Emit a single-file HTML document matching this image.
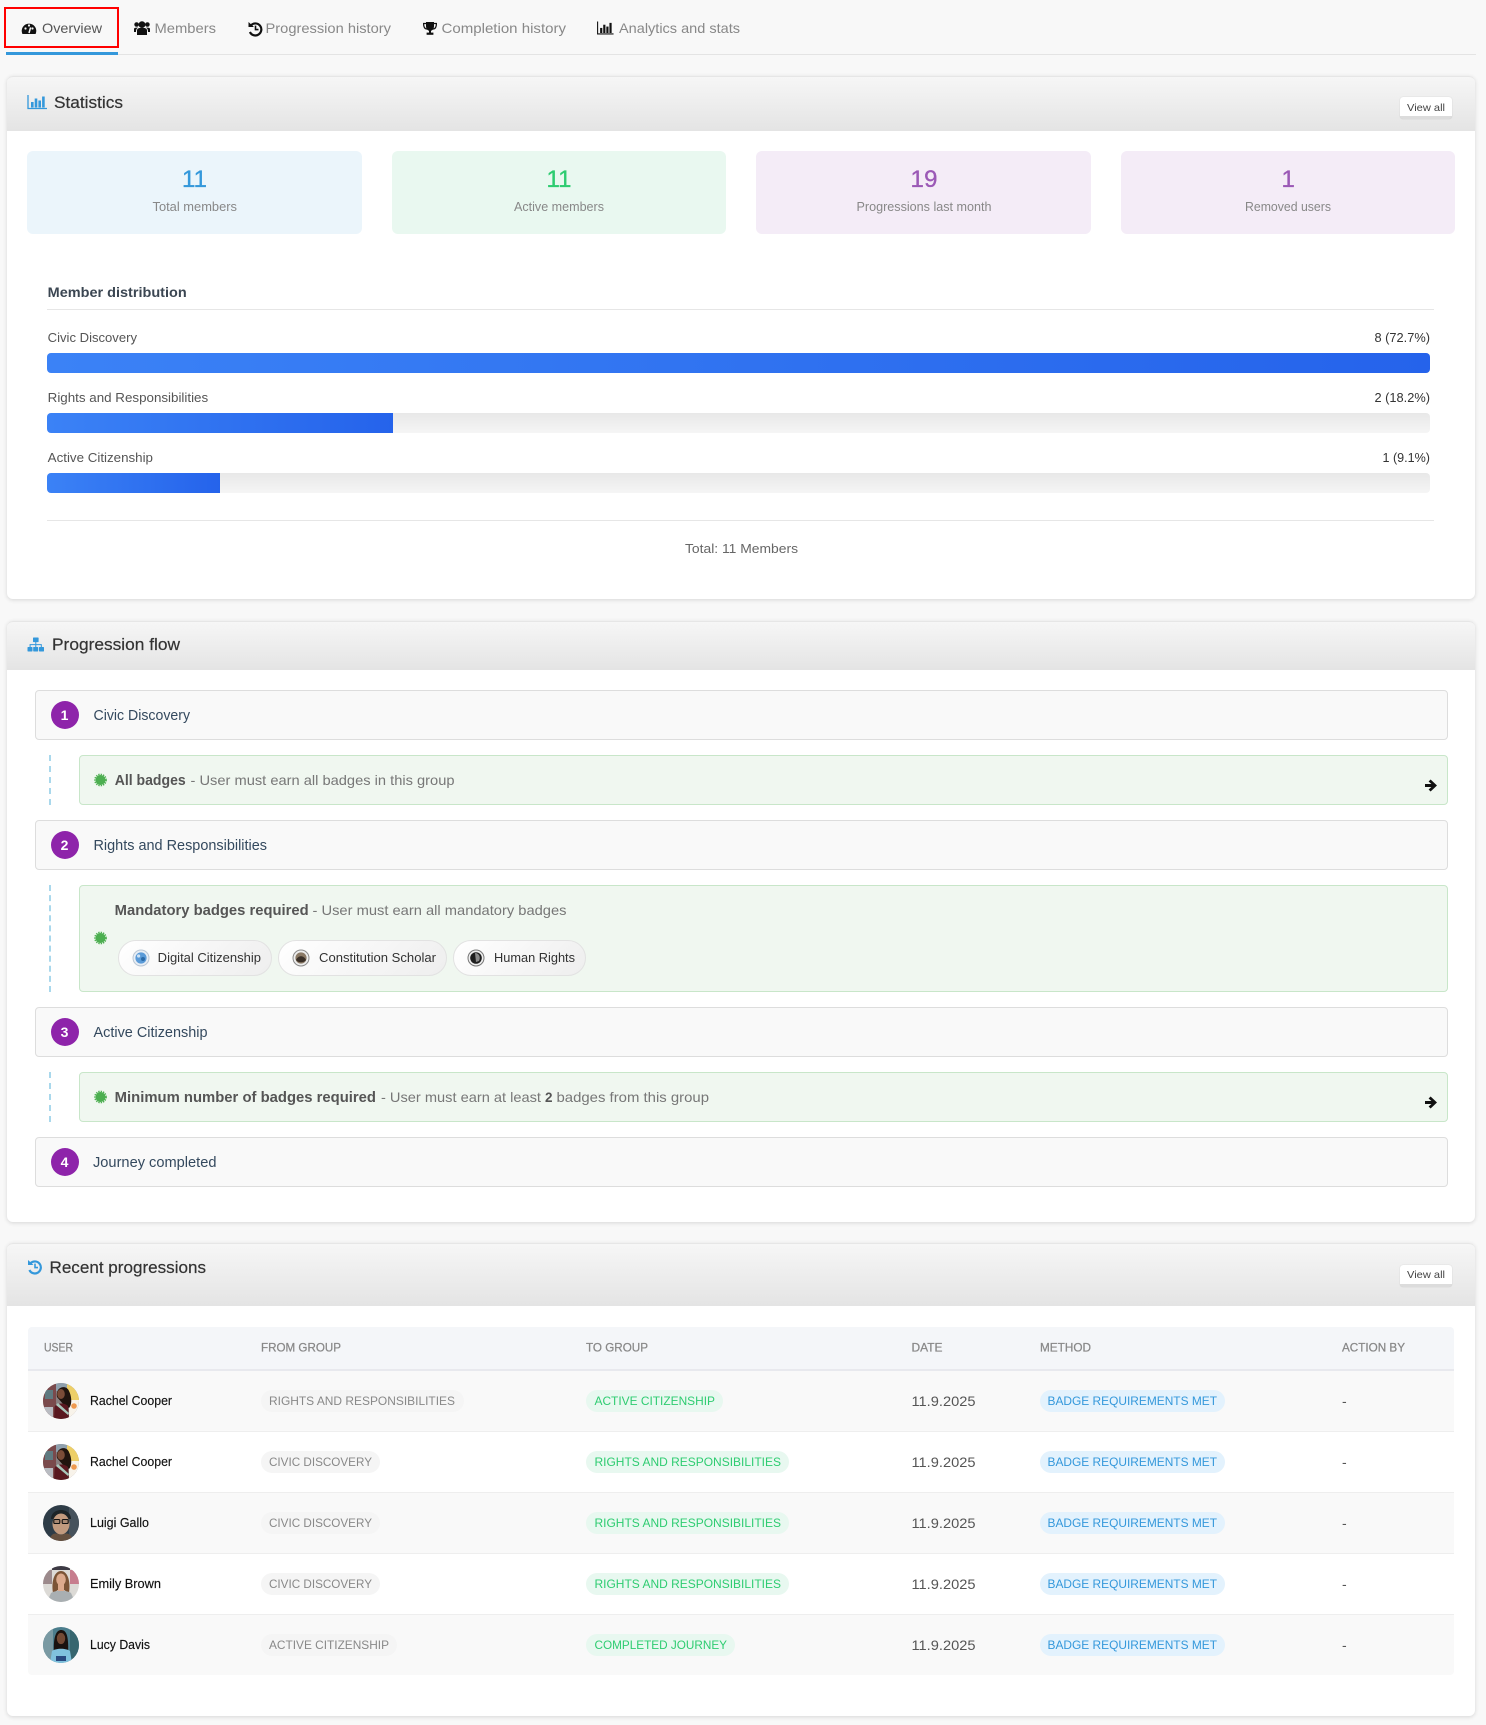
<!DOCTYPE html>
<html lang="en"><head><meta charset="utf-8"><title>Overview</title>
<style>
html,body{margin:0;padding:0}
body{width:1486px;height:1725px;background:#f8f8f8;position:relative;overflow:hidden;font-family:"Liberation Sans",sans-serif}
.b{position:absolute;box-sizing:border-box}
.card{background:#fff;border-radius:6px;box-shadow:0 1px 4px rgba(0,0,0,.14);left:7px;width:1468px}
.head{left:7px;width:1468px;background:linear-gradient(#f6f6f6,#e4e4e4);border-top:1px solid #e6e6e6;border-radius:6px 6px 0 0}
.va{background:#fff;border-radius:3px;border-bottom:3px solid #dcdcdc;box-shadow:0 0 1px rgba(0,0,0,.2);width:52px;height:22px;left:1400px}
.st{top:151px;height:83px;border-radius:6px}
.track{left:47px;width:1383px;height:20px;border-radius:4px;background:linear-gradient(#e8e8e8,#f5f5f5)}
.fill{position:absolute;left:0;top:0;height:20px;border-radius:4px 0 0 4px;background:linear-gradient(90deg,#3b82f6,#2563eb)}
.line{left:47px;width:1387px;height:1px;background:#e6e6e6}
.grp{left:35px;width:1413px;height:50px;background:#f9f9f9;border:1px solid #ddd;border-radius:4px}
.rule{left:79px;width:1369px;background:#f0f7f0;border:1px solid #c8e6c9;border-radius:4px}
.dash{left:49px;width:0;border-left:2px dashed #a9d8ec}
.num{left:51px;width:28px;height:28px;border-radius:50%;background:#8e24aa}
.chip{top:940px;height:36px;border:1px solid #e2e2e2;border-radius:18px;background:linear-gradient(135deg,#fff,#eee)}
.row{left:28px;width:1426px;height:61px;border-bottom:1px solid #eee}
.odd{background:#f9f9f9}.even{background:#fff}
.pill{height:22px;border-radius:11px}
.pf{background:#f5f5f5}.pt{background:#e8f8f0}.pm{background:#e3f2fd}
svg.o{position:absolute;left:0;top:0}
text{font-family:"Liberation Sans",sans-serif}
.tab{font-size:14px;fill:#888}
.h{font-size:17px;fill:#333;stroke:#333;stroke-width:.2}
.lab{font-size:12.5px;fill:#888}
.n{font-size:24px;stroke-width:.35}
.bl{font-size:13px;fill:#555}
.gt{font-size:14.5px;fill:#34495e}
.dg{font-size:14px;font-weight:700;fill:#fff;text-anchor:middle}
.rb{font-size:14.5px;font-weight:700;fill:#555}
.rt{font-size:14px;fill:#777}
.cp{font-size:12.5px;fill:#333}
.th{font-size:12px;fill:#888;stroke:#888;stroke-width:.25}
.nm{font-size:13px;fill:#111;stroke:#111;stroke-width:.15}
.pfx{font-size:12px;fill:#888}.ptx{font-size:12px;fill:#2ecc71}.pmx{font-size:12px;fill:#3498db}
.dt{font-size:14px;fill:#555}
</style></head><body>

<div class="b" style="left:6px;top:54px;width:1470px;height:1px;background:#e4e4e4"></div>
<div class="b" style="left:6px;top:52px;width:112px;height:3px;background:#3498db"></div>
<div class="b" style="left:4px;top:7px;width:115px;height:41px;border:2px solid #f00"></div>

<!-- Statistics -->
<div class="b card" style="top:76px;height:523px"></div>
<div class="b head" style="top:76px;height:55px"></div>
<div class="b va" style="top:97px"></div>
<div class="b st" style="left:27px;width:335px;background:#ebf5fb"></div>
<div class="b st" style="left:392px;width:334px;background:#e9f8f0"></div>
<div class="b st" style="left:756px;width:335px;background:#f4ecf7"></div>
<div class="b st" style="left:1121px;width:334px;background:#f4ecf7"></div>
<div class="b line" style="top:309px"></div>
<div class="b track" style="top:353px"><div class="fill" style="width:1383px;border-radius:4px"></div></div>
<div class="b track" style="top:413px"><div class="fill" style="width:346px"></div></div>
<div class="b track" style="top:473px"><div class="fill" style="width:173px"></div></div>
<div class="b line" style="top:520px"></div>

<!-- Progression flow -->
<div class="b card" style="top:621px;height:601px"></div>
<div class="b head" style="top:621px;height:49px"></div>
<div class="b grp" style="top:690px"></div>
<div class="b num" style="top:701px"></div>
<div class="b dash" style="top:755px;height:50px"></div>
<div class="b rule" style="top:755px;height:50px"></div>
<div class="b grp" style="top:820px"></div>
<div class="b num" style="top:831px"></div>
<div class="b dash" style="top:885px;height:107px"></div>
<div class="b rule" style="top:885px;height:107px"></div>
<div class="b chip" style="left:118px;width:154px"></div>
<div class="b chip" style="left:278px;width:169px"></div>
<div class="b chip" style="left:453px;width:133px"></div>
<div class="b grp" style="top:1007px"></div>
<div class="b num" style="top:1018px"></div>
<div class="b dash" style="top:1072px;height:50px"></div>
<div class="b rule" style="top:1072px;height:50px"></div>
<div class="b grp" style="top:1137px"></div>
<div class="b num" style="top:1148px"></div>

<!-- Recent progressions -->
<div class="b card" style="top:1243px;height:473px"></div>
<div class="b head" style="top:1243px;height:63px"></div>
<div class="b va" style="top:1265px"></div>
<div class="b" style="left:28px;top:1327px;width:1426px;height:44px;background:#f4f6f9;border-bottom:2px solid #e8e9ee;border-radius:4px 4px 0 0"></div>
<div class="b row odd" style="top:1371px"></div>
<div class="b row even" style="top:1432px"></div>
<div class="b row odd" style="top:1493px"></div>
<div class="b row even" style="top:1554px"></div>
<div class="b row odd" style="top:1615px;height:60px;border:0;border-radius:0 0 4px 4px"></div>

<div class="b pill pf" style="left:261px;top:1390px;width:203px"></div>
<div class="b pill pf" style="left:261px;top:1451px;width:119px"></div>
<div class="b pill pf" style="left:261px;top:1512px;width:119px"></div>
<div class="b pill pf" style="left:261px;top:1573px;width:119px"></div>
<div class="b pill pf" style="left:261px;top:1634px;width:136px"></div>
<div class="b pill pt" style="left:586px;top:1390px;width:137px"></div>
<div class="b pill pt" style="left:586px;top:1451px;width:203px"></div>
<div class="b pill pt" style="left:586px;top:1512px;width:203px"></div>
<div class="b pill pt" style="left:586px;top:1573px;width:203px"></div>
<div class="b pill pt" style="left:586px;top:1634px;width:149px"></div>
<div class="b pill pm" style="left:1040px;top:1390px;width:185px"></div>
<div class="b pill pm" style="left:1040px;top:1451px;width:185px"></div>
<div class="b pill pm" style="left:1040px;top:1512px;width:185px"></div>
<div class="b pill pm" style="left:1040px;top:1573px;width:185px"></div>
<div class="b pill pm" style="left:1040px;top:1634px;width:185px"></div>

<svg class="o" width="1486" height="1725" viewBox="0 0 1486 1725" xmlns="http://www.w3.org/2000/svg">
<defs>
<clipPath id="av"><circle cx="18" cy="18" r="18"/></clipPath>
<g id="bars"><path d="M0 0V13.5H19" fill="none" stroke="currentColor" stroke-width="1.3"/><rect x="3" y="7" width="2.6" height="5.5"/><rect x="6.7" y="3.5" width="2.6" height="9"/><rect x="10.4" y="5.5" width="2.6" height="7"/><rect x="14.1" y="1.5" width="2.6" height="11"/></g>
<g id="hist"><path d="M2.6 3.2A6 6 0 1 1 1.4 10" fill="none" stroke="currentColor" stroke-width="2.2"/><path d="M0 0L5.5 5H0Z"/><path d="M7 3.6V7.6H10" fill="none" stroke="currentColor" stroke-width="1.6"/></g>
<g id="cert"><circle cx="6.5" cy="6.5" r="5" fill="#4caf50"/><circle cx="6.5" cy="6.5" r="5.6" fill="none" stroke="#4caf50" stroke-width="1.6" stroke-dasharray="1.3 1.1"/></g>
<g id="arr"><path d="M5.6 0L12 6L5.6 12L3.6 10L6.4 7.5H0V4.5H6.4L3.6 2Z" fill="#111"/></g>
<g id="rachel" clip-path="url(#av)"><rect width="36" height="36" fill="#8a7f80"/><rect x="0" y="0" width="13" height="36" fill="#7a4a4c"/><rect x="2" y="7" width="8" height="9" fill="#5f7a80"/><rect x="0" y="24" width="10" height="12" fill="#b9bcc2"/><rect x="13" y="0" width="12" height="8" fill="#8fa0ad"/><rect x="24" y="0" width="12" height="18" fill="#edcf68"/><rect x="26" y="17" width="10" height="19" fill="#f8f3ea"/><circle cx="31" cy="23" r="2.8" fill="#ef9a50"/><path d="M14 14C12 4 23 1 26 8C29 14 29 22 26 25L20 21Z" fill="#21140f"/><ellipse cx="18" cy="11" rx="3.8" ry="5" fill="#7b4c38"/><path d="M11 36L11.5 24C13 20 21 19 25 23L26 36Z" fill="#5a1820"/><path d="M15 20L26 30L25 32L13 22Z" fill="#a9c6bb"/></g>
<g id="luigi" clip-path="url(#av)"><rect width="36" height="36" fill="#2e3c47"/><rect x="26" y="0" width="10" height="36" fill="#46525c"/><path d="M8 14C8 2 28 2 28 14Z" fill="#1d2427"/><ellipse cx="18" cy="19" rx="8.5" ry="10.5" fill="#c29a7e"/><rect x="10.8" y="14.5" width="6" height="4" rx="1" fill="#a88872" stroke="#111" stroke-width="1.1"/><rect x="19.2" y="14.5" width="6" height="4" rx="1" fill="#a88872" stroke="#111" stroke-width="1.1"/><path d="M6 36C8 28 12 27 18 30C24 27 28 28 30 36Z" fill="#66503f"/></g>
<g id="emily" clip-path="url(#av)"><rect width="36" height="36" fill="#dcdad6"/><rect x="0" y="4" width="9" height="14" fill="#9c8a8c"/><rect x="27" y="4" width="9" height="14" fill="#c77d8e"/><rect x="9" y="0" width="18" height="4" fill="#3d3a44"/><path d="M10 27C8 14 12 5 18 5C24 5 28 14 26 27L21 24H15Z" fill="#7b5436"/><ellipse cx="18" cy="13.5" rx="4.8" ry="6" fill="#dcaa8d"/><path d="M4 36L8 27C12 24 24 24 28 27L32 36Z" fill="#a9afb2"/><rect x="15" y="18" width="6" height="7" fill="#dcaa8d"/></g>
<g id="lucy" clip-path="url(#av)"><rect width="36" height="36" fill="#4b7d8c"/><rect x="0" y="0" width="10" height="36" fill="#7a9aa3"/><rect x="27" y="0" width="9" height="36" fill="#37666f"/><path d="M11 26C10 8 14 3 18 3C23 3 26 8 25 26L21 22H15Z" fill="#1a120f"/><ellipse cx="18" cy="11.5" rx="4.2" ry="5.6" fill="#734a35"/><path d="M7 36L9 24C13 21 23 21 27 24L29 36Z" fill="#80c2de"/><rect x="13" y="29" width="10" height="5" fill="#294a80"/></g>
</defs>

<!-- tab icons -->
<path d="M22.4 34A7.3 7.3 0 1 1 35.6 34Z" fill="#111"/><circle cx="25.5" cy="28.5" r="1.1" fill="#f8f8f8"/><circle cx="29" cy="25.5" r="1.1" fill="#f8f8f8"/><circle cx="32.5" cy="28.5" r="1.1" fill="#f8f8f8"/><path d="M29 33L30.6 27.4" stroke="#f8f8f8" stroke-width="1.5"/>
<g fill="#111"><circle cx="142" cy="24.6" r="3.4"/><path d="M137 35V30.5C137 28.8 138.5 28 140 28H144C145.5 28 147 28.8 147 30.5V35Z"/><circle cx="136.6" cy="24.5" r="2.3"/><circle cx="147.4" cy="24.5" r="2.3"/><path d="M134 32V29C134 28 135 27.6 136.5 27.6L138 27.6C136.6 28.6 136 29.5 136 32Z"/><path d="M150 32V29C150 28 149 27.6 147.5 27.6L146 27.6C147.4 28.6 148 29.5 148 32Z"/></g>
<use href="#hist" transform="translate(248.5,22)" fill="#111" color="#111"/>
<g fill="#111"><path d="M426 22H434V26.5A4 4.4 0 0 1 426 26.5Z"/><path d="M426 23.5H423.6C423.6 27.5 425 29 427 29M434 23.5H436.4C436.4 27.5 435 29 433 29" fill="none" stroke="#111" stroke-width="1.2"/><rect x="429" y="30" width="2" height="3"/><rect x="426.6" y="32.6" width="6.8" height="2.2"/></g>
<use href="#bars" transform="translate(597.6,21.5) scale(.84,.92)" fill="#111" color="#111"/>
<g class="tab">
<text x="42" y="33" textLength="60" lengthAdjust="spacingAndGlyphs" font-size="14" style="fill:#555">Overview</text>
<text x="154.5" y="33" textLength="61.5" lengthAdjust="spacingAndGlyphs">Members</text>
<text x="265.5" y="33" textLength="125.5" lengthAdjust="spacingAndGlyphs">Progression history</text>
<text x="441.5" y="33" textLength="124.5" lengthAdjust="spacingAndGlyphs">Completion history</text>
<text x="619" y="33" textLength="121" lengthAdjust="spacingAndGlyphs">Analytics and stats</text>
</g>

<!-- statistics -->
<use href="#bars" transform="translate(28,95)" fill="#3498db" color="#3498db"/>
<text class="h" x="54" y="108" textLength="69" lengthAdjust="spacingAndGlyphs" style="font-size:16.5px">Statistics</text>
<text x="1407" y="111" textLength="38" lengthAdjust="spacingAndGlyphs" font-size="10.5" fill="#444">View all</text>
<text class="n" x="182" y="187" textLength="25" fill="#3498db" stroke="#3498db">11</text>
<text class="n" x="546.5" y="187" textLength="25" fill="#2ecc71" stroke="#2ecc71">11</text>
<text class="n" x="910.5" y="187" textLength="27" fill="#9b59b6" stroke="#9b59b6">19</text>
<text class="n" x="1281.5" y="187" fill="#9b59b6" stroke="#9b59b6">1</text>
<text class="lab" x="152.5" y="211" textLength="84.5" lengthAdjust="spacingAndGlyphs">Total members</text>
<text class="lab" x="514" y="211" textLength="90" lengthAdjust="spacingAndGlyphs">Active members</text>
<text class="lab" x="856.5" y="211" textLength="135" lengthAdjust="spacingAndGlyphs">Progressions last month</text>
<text class="lab" x="1245" y="211" textLength="86" lengthAdjust="spacingAndGlyphs">Removed users</text>
<text x="47.7" y="297" textLength="139" lengthAdjust="spacingAndGlyphs" font-size="14" font-weight="700" fill="#3b4652">Member distribution</text>
<text class="bl" x="47.7" y="342" textLength="89.3" lengthAdjust="spacingAndGlyphs">Civic Discovery</text>
<text class="bl" x="47.7" y="402" textLength="160.5" lengthAdjust="spacingAndGlyphs">Rights and Responsibilities</text>
<text class="bl" x="47.7" y="462" textLength="105.3" lengthAdjust="spacingAndGlyphs">Active Citizenship</text>
<text class="bl" x="1374.5" y="342" textLength="55.5" lengthAdjust="spacingAndGlyphs" style="fill:#333">8 (72.7%)</text>
<text class="bl" x="1374.5" y="402" textLength="55.5" lengthAdjust="spacingAndGlyphs" style="fill:#333">2 (18.2%)</text>
<text class="bl" x="1382.5" y="462" textLength="47.5" lengthAdjust="spacingAndGlyphs" style="fill:#333">1 (9.1%)</text>
<text class="bl" x="685" y="553" textLength="113" lengthAdjust="spacingAndGlyphs" style="fill:#666">Total: 11 Members</text>

<!-- progression flow -->
<g fill="#3498db"><rect x="33" y="637.5" width="5.6" height="4.6" rx=".6"/><rect x="27.5" y="647" width="5" height="4.5" rx=".6"/><rect x="33.2" y="647" width="5" height="4.5" rx=".6"/><rect x="39" y="647" width="5" height="4.5" rx=".6"/><path d="M35.3 641.7H36.3V644.1H41.8V647H40.8V645.1H36.3V647H35.3V645.1H30.6V647H29.6V644.1H35.3Z"/></g>
<text class="h" x="52" y="650" textLength="128" lengthAdjust="spacingAndGlyphs">Progression flow</text>
<text class="dg" x="64.5" y="720">1</text><text class="dg" x="64.5" y="850">2</text><text class="dg" x="64.5" y="1037">3</text><text class="dg" x="64.5" y="1167">4</text>
<text class="gt" x="93.5" y="720" textLength="96.5" lengthAdjust="spacingAndGlyphs">Civic Discovery</text>
<text class="gt" x="93.5" y="850" textLength="173.5" lengthAdjust="spacingAndGlyphs">Rights and Responsibilities</text>
<text class="gt" x="93.5" y="1037" textLength="114" lengthAdjust="spacingAndGlyphs">Active Citizenship</text>
<text class="gt" x="93" y="1167" textLength="123.5" lengthAdjust="spacingAndGlyphs">Journey completed</text>

<use href="#cert" transform="translate(94,773.5)"/>
<text class="rb" x="114.7" y="785" textLength="71" lengthAdjust="spacingAndGlyphs">All badges</text>
<text class="rt" x="190.5" y="785" textLength="264" lengthAdjust="spacingAndGlyphs">- User must earn all badges in this group</text>
<use href="#arr" transform="translate(1425,779.5)"/>

<use href="#cert" transform="translate(94,931.5)"/>
<text class="rb" x="114.7" y="915" textLength="194" lengthAdjust="spacingAndGlyphs">Mandatory badges required</text>
<text class="rt" x="312.5" y="915" textLength="254" lengthAdjust="spacingAndGlyphs">- User must earn all mandatory badges</text>

<circle cx="141" cy="958" r="8" fill="#e8eef5" stroke="#b9c6d4"/><circle cx="141" cy="958" r="5.6" fill="#5b9bd8"/><circle cx="143" cy="959" r="2" fill="#2a6aa8"/><circle cx="138.6" cy="956" r="1.6" fill="#cfe3f5"/>
<text class="cp" x="157.7" y="962" textLength="103.3" lengthAdjust="spacingAndGlyphs">Digital Citizenship</text>
<circle cx="301" cy="958" r="8" fill="#eee" stroke="#8a8a8a"/><circle cx="301" cy="958" r="5.6" fill="#8b7a66"/><path d="M296 960C298 955 304 955 306 960C304 963 298 963 296 960Z" fill="#3a3028"/>
<text class="cp" x="319" y="962" textLength="117" lengthAdjust="spacingAndGlyphs">Constitution Scholar</text>
<circle cx="476" cy="958" r="8" fill="#eee" stroke="#777"/><circle cx="476" cy="958" r="5.8" fill="#1e1e1e"/><path d="M475 953C479 953 481 957 479 961L476 962Z" fill="#8a8a8a"/>
<text class="cp" x="494" y="962" textLength="81" lengthAdjust="spacingAndGlyphs">Human Rights</text>

<use href="#cert" transform="translate(94,1090.5)"/>
<text class="rb" x="114.7" y="1102" textLength="261.3" lengthAdjust="spacingAndGlyphs">Minimum number of badges required</text>
<text class="rt" x="381" y="1102" textLength="160" lengthAdjust="spacingAndGlyphs">- User must earn at least</text>
<text class="rb" x="545" y="1102" textLength="7.5" lengthAdjust="spacingAndGlyphs" style="font-size:14px">2</text>
<text class="rt" x="556.5" y="1102" textLength="152.5" lengthAdjust="spacingAndGlyphs">badges from this group</text>
<use href="#arr" transform="translate(1425,1096.5)"/>

<!-- recent -->
<use href="#hist" transform="translate(28,1260)" fill="#3498db" color="#3498db"/>
<text class="h" x="49.5" y="1273" textLength="156.5" lengthAdjust="spacingAndGlyphs">Recent progressions</text>
<text x="1407" y="1278" textLength="38" lengthAdjust="spacingAndGlyphs" font-size="10.5" fill="#444">View all</text>
<text class="th" x="44" y="1351.5" textLength="29" lengthAdjust="spacingAndGlyphs">USER</text>
<text class="th" x="261" y="1351.5" textLength="80" lengthAdjust="spacingAndGlyphs">FROM GROUP</text>
<text class="th" x="586" y="1351.5" textLength="62" lengthAdjust="spacingAndGlyphs">TO GROUP</text>
<text class="th" x="911.5" y="1351.5" textLength="31" lengthAdjust="spacingAndGlyphs">DATE</text>
<text class="th" x="1040" y="1351.5" textLength="51" lengthAdjust="spacingAndGlyphs">METHOD</text>
<text class="th" x="1342" y="1351.5" textLength="63" lengthAdjust="spacingAndGlyphs">ACTION BY</text>

<use href="#rachel" transform="translate(43,1383)"/>
<use href="#rachel" transform="translate(43,1444)"/>
<use href="#luigi" transform="translate(43,1505)"/>
<use href="#emily" transform="translate(43,1566)"/>
<use href="#lucy" transform="translate(43,1627)"/>
<text class="nm" x="90" y="1405" textLength="82" lengthAdjust="spacingAndGlyphs">Rachel Cooper</text>
<text class="nm" x="90" y="1466" textLength="82" lengthAdjust="spacingAndGlyphs">Rachel Cooper</text>
<text class="nm" x="90" y="1527" textLength="59" lengthAdjust="spacingAndGlyphs">Luigi Gallo</text>
<text class="nm" x="90" y="1588" textLength="71" lengthAdjust="spacingAndGlyphs">Emily Brown</text>
<text class="nm" x="90" y="1649" textLength="60" lengthAdjust="spacingAndGlyphs">Lucy Davis</text>

<text class="pfx" x="269" y="1405" textLength="186" lengthAdjust="spacingAndGlyphs">RIGHTS AND RESPONSIBILITIES</text>
<text class="pfx" x="269" y="1466" textLength="103" lengthAdjust="spacingAndGlyphs">CIVIC DISCOVERY</text>
<text class="pfx" x="269" y="1527" textLength="103" lengthAdjust="spacingAndGlyphs">CIVIC DISCOVERY</text>
<text class="pfx" x="269" y="1588" textLength="103" lengthAdjust="spacingAndGlyphs">CIVIC DISCOVERY</text>
<text class="pfx" x="269" y="1649" textLength="120" lengthAdjust="spacingAndGlyphs">ACTIVE CITIZENSHIP</text>

<text class="ptx" x="594.5" y="1405" textLength="120.5" lengthAdjust="spacingAndGlyphs">ACTIVE CITIZENSHIP</text>
<text class="ptx" x="594.5" y="1466" textLength="186.5" lengthAdjust="spacingAndGlyphs">RIGHTS AND RESPONSIBILITIES</text>
<text class="ptx" x="594.5" y="1527" textLength="186.5" lengthAdjust="spacingAndGlyphs">RIGHTS AND RESPONSIBILITIES</text>
<text class="ptx" x="594.5" y="1588" textLength="186.5" lengthAdjust="spacingAndGlyphs">RIGHTS AND RESPONSIBILITIES</text>
<text class="ptx" x="594.5" y="1649" textLength="132.5" lengthAdjust="spacingAndGlyphs">COMPLETED JOURNEY</text>

<text class="dt" x="911.5" y="1406" textLength="64" lengthAdjust="spacingAndGlyphs">11.9.2025</text>
<text class="dt" x="911.5" y="1467" textLength="64" lengthAdjust="spacingAndGlyphs">11.9.2025</text>
<text class="dt" x="911.5" y="1528" textLength="64" lengthAdjust="spacingAndGlyphs">11.9.2025</text>
<text class="dt" x="911.5" y="1589" textLength="64" lengthAdjust="spacingAndGlyphs">11.9.2025</text>
<text class="dt" x="911.5" y="1650" textLength="64" lengthAdjust="spacingAndGlyphs">11.9.2025</text>

<text class="pmx" x="1047.5" y="1405" textLength="169.5" lengthAdjust="spacingAndGlyphs">BADGE REQUIREMENTS MET</text>
<text class="pmx" x="1047.5" y="1466" textLength="169.5" lengthAdjust="spacingAndGlyphs">BADGE REQUIREMENTS MET</text>
<text class="pmx" x="1047.5" y="1527" textLength="169.5" lengthAdjust="spacingAndGlyphs">BADGE REQUIREMENTS MET</text>
<text class="pmx" x="1047.5" y="1588" textLength="169.5" lengthAdjust="spacingAndGlyphs">BADGE REQUIREMENTS MET</text>
<text class="pmx" x="1047.5" y="1649" textLength="169.5" lengthAdjust="spacingAndGlyphs">BADGE REQUIREMENTS MET</text>

<text class="dt" x="1342" y="1406">-</text>
<text class="dt" x="1342" y="1467">-</text>
<text class="dt" x="1342" y="1528">-</text>
<text class="dt" x="1342" y="1589">-</text>
<text class="dt" x="1342" y="1650">-</text>
</svg>
</body></html>
